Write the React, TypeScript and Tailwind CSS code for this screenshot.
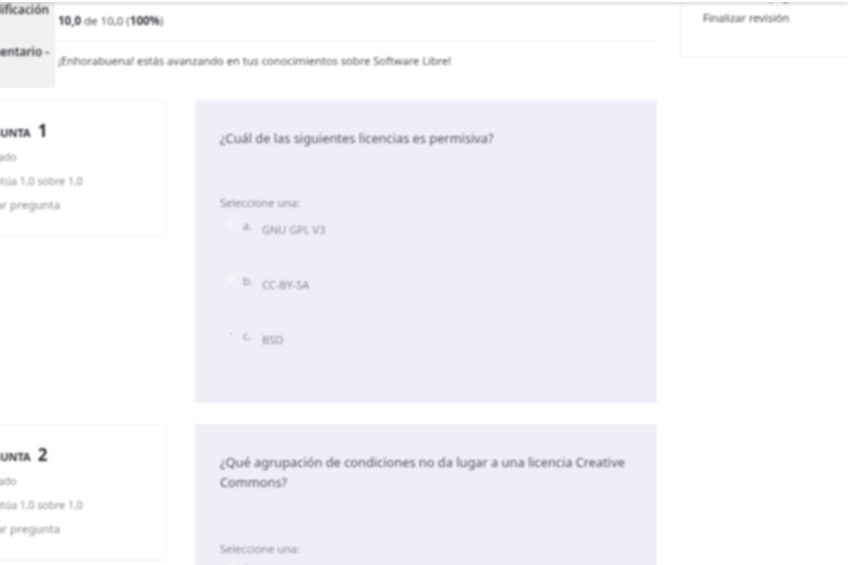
import React from 'react';

const OPTIONS = [
  { letter: 'a.', text: 'GNU GPL V3', checked: false },
  { letter: 'b.', text: 'CC-BY-SA', checked: false },
  { letter: 'c.', text: 'BSD', checked: true },
];

const InfoCard = ({ n }: { n: number }) => (
  <div className="w-[212px] h-[136px] shrink-0 rounded-[2px] border border-[#f0f0f2] bg-white pl-[12px] pt-[20px] shadow-[0_1px_2px_rgba(0,0,0,0.03)]">
    <h3 className="ml-[5px] flex items-baseline gap-[7px] text-[#2b2b33] font-bold leading-[20px]">
      <span className="text-[11px]">PREGUNTA</span>
      <span className="text-[17px]">{n}</span>
    </h3>
    <p className="mt-[3px] text-[10.5px] leading-[23.5px] text-[#85858c]">Finalizado</p>
    <p className="text-[10.5px] leading-[23.5px] text-[#85858c]">Se puntúa 1,0 sobre 1,0</p>
    <p className="ml-[2px] text-[11.5px] leading-[23.5px] text-[#85858c]">Marcar pregunta</p>
  </div>
);

export default function App() {
  return (
    <div className="relative w-[848px] h-[565px] overflow-hidden bg-white font-['Noto_Sans',sans-serif]">
      <div className="absolute inset-x-0 top-0 z-10 h-[2px] bg-white shadow-[0_1px_4px_rgba(40,40,60,0.35)]" />
      <div className="flex blur-[0.85px]">
        <main className="ml-[-46px] w-[703px] shrink-0">
          <div className="flex h-[51px] mt-[-10px] border-b border-[#eeeeee]">
            <div className="w-[101px] shrink-0 bg-[#f0f0f0] pt-[11px] pr-[6px] text-right text-[11.8px] font-semibold text-[#33333a]">
              Calificación
            </div>
            <div className="pl-[3px] pt-[22px] text-[11.5px] text-[#4d4d54]">
              <b className="text-[#2e2e35]">10,0</b> de 10,0 (<b className="text-[#2e2e35]">100%</b>)
            </div>
          </div>
          <div className="flex h-[47px]">
            <div className="w-[101px] shrink-0 bg-[#f0f0f0] pt-[2px] pr-[6px] text-right text-[11.8px] font-semibold text-[#33333a]">
              Comentario -
            </div>
            <div className="pl-[3px] pt-[12px] text-[11.1px] text-[#4d4d54]">
              ¡Enhorabuena! estás avanzando en tus conocimientos sobre Software Libre!
            </div>
          </div>

          <section className="mt-[12px] flex gap-[29px]">
            <InfoCard n={1} />
            <div className="h-[303px] w-[462px] shrink-0 bg-[#eeeff6] pl-[25px] pt-[28px]">
              <p className="w-[412px] text-[12.8px] leading-[20px] text-[#4f4f58]">¿Cuál de las siguientes licencias es permisiva?</p>
              <p className="mt-[48px] text-[11px] leading-[14px] text-[#85858d]">Seleccione una:</p>
              <div className="mt-[9px]">
                {OPTIONS.map((o) => (
                  <div key={o.letter} className="flex h-[55px] pl-[8px] text-[11px] text-[#85858d]">
                    <span className="mt-[2px] flex h-[6px] w-[6px] items-center justify-center rounded-full bg-[#f6f6fa]">
                      {o.checked && <span className="h-[2px] w-[2px] rounded-full bg-[#8c8c94]" />}
                    </span>
                    <span className="ml-[9px] w-[19px] leading-[14px]">{o.letter}</span>
                    <span className="mt-[4px] leading-[14px]">{o.text}</span>
                  </div>
                ))}
              </div>
            </div>
          </section>

          <section className="mt-[21px] flex gap-[29px]">
            <InfoCard n={2} />
            <div className="h-[304px] w-[462px] shrink-0 bg-[#eeeff6] pl-[25px] pt-[28px]">
              <p className="w-[412px] text-[12.8px] leading-[20px] text-[#4f4f58]">
                ¿Qué agrupación de condiciones no da lugar a una licencia Creative Commons?
              </p>
              <p className="mt-[50px] text-[11px] leading-[14px] text-[#85858d]">Seleccione una:</p>
              <div className="mt-[4px] flex pl-[8px] text-[11px] text-[#85858d]">
                <span className="mt-[2px] h-[6px] w-[6px] rounded-full bg-[#f6f6fa]" />
                <span className="ml-[9px] w-[19px] leading-[14px]">a.</span>
                <span className="mt-[4px] leading-[14px]">BY-NC-ND</span>
              </div>
            </div>
          </section>
        </main>

        <aside className="ml-[23px] mt-[-30px] h-[87px] w-[200px] shrink-0 rounded-[2px] border border-[#f0f0f2] bg-white pl-[22px] pt-[13px] text-[11px] leading-[24px] text-[#45454d]">
          <p>Mostrar una página</p>
          <p className="mt-[-2px]">Finalizar revisión</p>
        </aside>
      </div>
    </div>
  );
}
